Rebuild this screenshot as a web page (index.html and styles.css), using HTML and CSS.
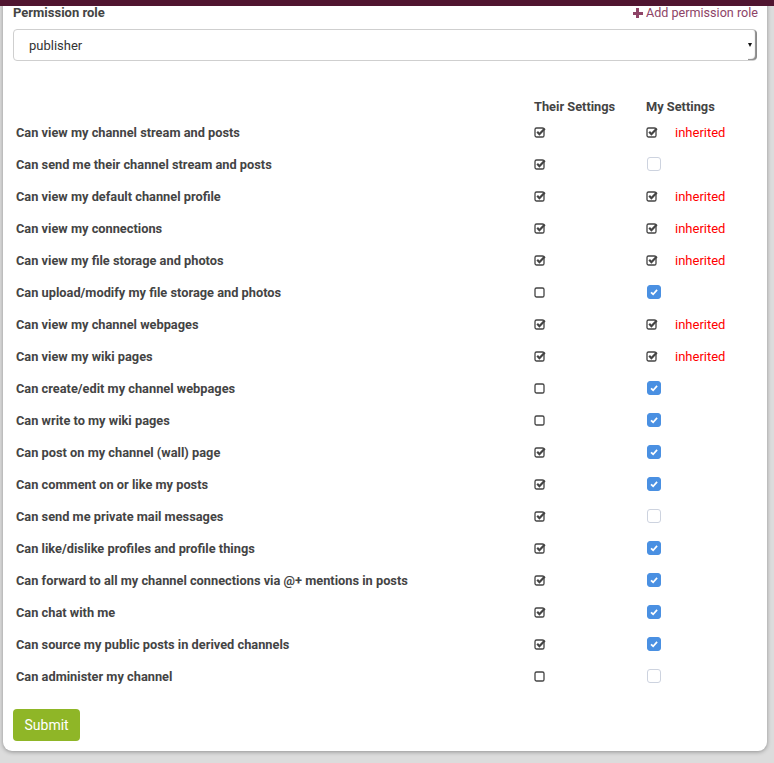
FILE: index.html
```html
<!DOCTYPE html>
<html>
<head>
<meta charset="utf-8">
<link rel="stylesheet" href="styles.css">
</head>
<body>
<svg class="sprite" xmlns="http://www.w3.org/2000/svg">
  <symbol id="sq-check" viewBox="0 0 12 12">
    <rect x="1" y="2" width="9" height="9" rx="1.6" fill="none" stroke="#444" stroke-width="1.3"/>
    <path d="M3.2 5.8 L5.4 8.2 L10.8 2.4" fill="none" stroke="#444" stroke-width="2.2"/>
  </symbol>
  <symbol id="sq" viewBox="0 0 12 12">
    <rect x="1" y="2" width="9" height="9" rx="1.6" fill="none" stroke="#444" stroke-width="1.3"/>
  </symbol>
  <symbol id="tick" viewBox="0 0 14 14">
    <path d="M3.5 7.3 L6 9.6 L10.6 4.6" fill="none" stroke="#fff" stroke-width="2"/>
  </symbol>
</svg>
<div class="topbar"></div>
<div class="card">
  <div class="rolehead">
    <span class="rolelabel">Permission role</span>
    <a class="addrole"><span class="plus"></span>Add permission role</a>
  </div>
  <div class="select">
    <span class="seltext">publisher</span>
    <span class="selbtn"><span class="tri"></span></span>
  </div>

  <div class="perms">
    <div class="hd"></div><div class="hd">Their Settings</div><div class="hd">My Settings</div>

    <div class="lbl">Can view my channel stream and posts</div>
    <div class="c2"><svg class="g"><use href="#sq-check"/></svg></div>
    <div class="c3"><svg class="g"><use href="#sq-check"/></svg><span class="inh">inherited</span></div>

    <div class="lbl">Can send me their channel stream and posts</div>
    <div class="c2"><svg class="g"><use href="#sq-check"/></svg></div>
    <div class="c3"><span class="cb"></span></div>

    <div class="lbl">Can view my default channel profile</div>
    <div class="c2"><svg class="g"><use href="#sq-check"/></svg></div>
    <div class="c3"><svg class="g"><use href="#sq-check"/></svg><span class="inh">inherited</span></div>

    <div class="lbl">Can view my connections</div>
    <div class="c2"><svg class="g"><use href="#sq-check"/></svg></div>
    <div class="c3"><svg class="g"><use href="#sq-check"/></svg><span class="inh">inherited</span></div>

    <div class="lbl">Can view my file storage and photos</div>
    <div class="c2"><svg class="g"><use href="#sq-check"/></svg></div>
    <div class="c3"><svg class="g"><use href="#sq-check"/></svg><span class="inh">inherited</span></div>

    <div class="lbl">Can upload/modify my file storage and photos</div>
    <div class="c2"><svg class="g"><use href="#sq"/></svg></div>
    <div class="c3"><span class="cb on"><svg><use href="#tick"/></svg></span></div>

    <div class="lbl">Can view my channel webpages</div>
    <div class="c2"><svg class="g"><use href="#sq-check"/></svg></div>
    <div class="c3"><svg class="g"><use href="#sq-check"/></svg><span class="inh">inherited</span></div>

    <div class="lbl">Can view my wiki pages</div>
    <div class="c2"><svg class="g"><use href="#sq-check"/></svg></div>
    <div class="c3"><svg class="g"><use href="#sq-check"/></svg><span class="inh">inherited</span></div>

    <div class="lbl">Can create/edit my channel webpages</div>
    <div class="c2"><svg class="g"><use href="#sq"/></svg></div>
    <div class="c3"><span class="cb on"><svg><use href="#tick"/></svg></span></div>

    <div class="lbl">Can write to my wiki pages</div>
    <div class="c2"><svg class="g"><use href="#sq"/></svg></div>
    <div class="c3"><span class="cb on"><svg><use href="#tick"/></svg></span></div>

    <div class="lbl">Can post on my channel (wall) page</div>
    <div class="c2"><svg class="g"><use href="#sq-check"/></svg></div>
    <div class="c3"><span class="cb on"><svg><use href="#tick"/></svg></span></div>

    <div class="lbl">Can comment on or like my posts</div>
    <div class="c2"><svg class="g"><use href="#sq-check"/></svg></div>
    <div class="c3"><span class="cb on"><svg><use href="#tick"/></svg></span></div>

    <div class="lbl">Can send me private mail messages</div>
    <div class="c2"><svg class="g"><use href="#sq-check"/></svg></div>
    <div class="c3"><span class="cb"></span></div>

    <div class="lbl">Can like/dislike profiles and profile things</div>
    <div class="c2"><svg class="g"><use href="#sq-check"/></svg></div>
    <div class="c3"><span class="cb on"><svg><use href="#tick"/></svg></span></div>

    <div class="lbl">Can forward to all my channel connections via @+ mentions in posts</div>
    <div class="c2"><svg class="g"><use href="#sq-check"/></svg></div>
    <div class="c3"><span class="cb on"><svg><use href="#tick"/></svg></span></div>

    <div class="lbl">Can chat with me</div>
    <div class="c2"><svg class="g"><use href="#sq-check"/></svg></div>
    <div class="c3"><span class="cb on"><svg><use href="#tick"/></svg></span></div>

    <div class="lbl">Can source my public posts in derived channels</div>
    <div class="c2"><svg class="g"><use href="#sq-check"/></svg></div>
    <div class="c3"><span class="cb on"><svg><use href="#tick"/></svg></span></div>

    <div class="lbl">Can administer my channel</div>
    <div class="c2"><svg class="g"><use href="#sq"/></svg></div>
    <div class="c3"><span class="cb"></span></div>
  </div>

  <button class="submit">Submit</button>
</div>
</body>
</html>
```

FILE: styles.css
```css
html, body {
  margin: 0;
  padding: 0;
}
body {
  background: #dcdcdc;
  font-family: Roboto, "Liberation Sans", sans-serif;
  color: #444;
  height: 763px;
  overflow: hidden;
}
.sprite {
  width: 0;
  height: 0;
  position: absolute;
}
.topbar {
  position: absolute;
  top: 0;
  left: 0;
  right: 0;
  height: 6px;
  background: #501530;
  z-index: 5;
}
.card {
  margin-left: 3px;
  width: 764px;
  height: 751px;
  box-sizing: border-box;
  background: #fff;
  border-radius: 0 0 9px 9px;
  box-shadow: 0 1px 4px rgba(0, 0, 0, 0.35);
  padding: 5px 10px 10px 10px;
  display: flex;
  flex-direction: column;
}
.rolehead {
  display: flex;
  justify-content: space-between;
  align-items: center;
  height: 16px;
  line-height: 16px;
}
.rolelabel {
  font-size: 13px;
  font-weight: bold;
  color: #444;
}
.addrole {
  font-size: 12.6px;
  color: #8e4467;
  display: flex;
  align-items: center;
  margin-right: -1px;
}
.plus {
  width: 10px;
  height: 10px;
  margin-right: 3px;
  background:
    linear-gradient(#8e4467, #8e4467) center / 10px 3px no-repeat,
    linear-gradient(#8e4467, #8e4467) center / 3px 10px no-repeat;
}
.select {
  margin-top: 8px;
  height: 32px;
  box-sizing: border-box;
  border: 1px solid #cfcfcf;
  border-radius: 4px;
  display: flex;
  align-items: center;
  justify-content: space-between;
  width: 744px;
}
.seltext {
  padding-left: 15px;
  font-size: 13px;
  color: #333;
}
.selbtn {
  width: 9px;
  height: 30px;
  margin-right: -1px;
  border-radius: 0 4px 4px 0;
  box-shadow: inset -2px -1px 1px #8a8a8a;
  display: flex;
  align-items: center;
  justify-content: flex-start;
}
.tri {
  width: 0;
  height: 0;
  border-left: 2.5px solid transparent;
  border-right: 2.5px solid transparent;
  border-top: 4px solid #111;
}
.perms {
  margin-top: 36px;
  display: grid;
  grid-template-columns: 521px 112px 1fr;
  grid-auto-rows: 32px;
  grid-template-rows: 19px;
  align-items: center;
}
.hd {
  font-size: 12.8px;
  font-weight: bold;
  color: #444;
  align-self: center;
}
.lbl {
  padding-left: 3px;
  font-size: 12.8px;
  font-weight: bold;
  color: #444;
}
.c2, .c3 {
  display: flex;
  align-items: center;
}
.g {
  width: 12px;
  height: 12px;
  display: block;
}
.inh {
  margin-left: 17px;
  font-size: 13px;
  color: #ff0000;
}
.cb {
  width: 14px;
  height: 14px;
  box-sizing: border-box;
  border: 1px solid #cdd3df;
  border-radius: 3px;
  background: #fff;
  display: flex;
  align-items: center;
  justify-content: center;
  margin-left: 1px;
}
.cb.on {
  background: #4a90e2;
  border-color: #4a90e2;
}
.cb svg {
  width: 14px;
  height: 14px;
  display: block;
}
.submit {
  margin-top: 17px;
  align-self: flex-start;
  height: 32px;
  padding: 0 11.5px;
  border: none;
  border-radius: 4px;
  background: #8fb627;
  color: #fff;
  font-family: Roboto, "Liberation Sans", sans-serif;
  font-size: 14px;
}
```
